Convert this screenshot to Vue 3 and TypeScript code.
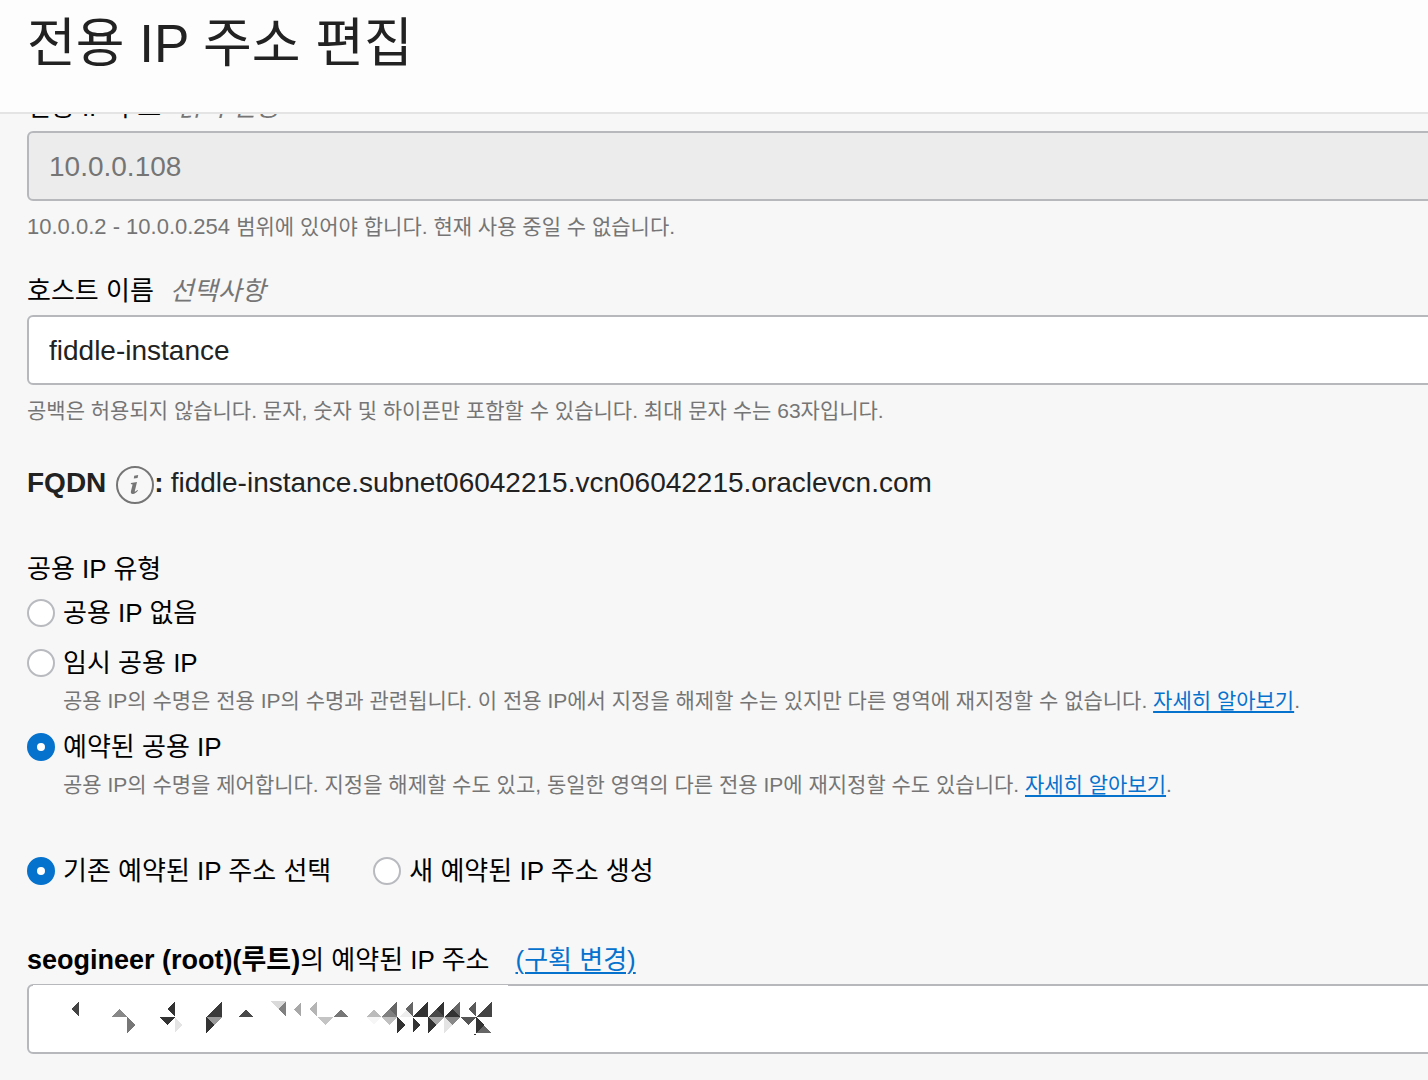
<script setup lang="ts">
import { ref } from 'vue'

interface Shard {
  points: string
  fill: string
}

const privateIp = ref('10.0.0.108')
const hostname = ref('fiddle-instance')
const publicIpType = ref('reserved')
const reservedMode = ref('existing')

// Masked value of the reserved address, drawn as triangular mosaic cells.
const shards: Shard[] = [
  { points: '24,24 32,16 32,32', fill: '#444' },
  { points: '65,32 72,24 80,32', fill: '#888' },
  { points: '80,32 88,40 80,48', fill: '#777' },
  { points: '120,24 128,16 128,32', fill: '#333' },
  { points: '112,32 128,32 120,40', fill: '#333' },
  { points: '128,32 135,40 128,47', fill: '#e4e4e4' },
  { points: '159,32 175,16 175,32', fill: '#3a3a3a' },
  { points: '159,32 167,40 159,48', fill: '#333' },
  { points: '159,32 175,32 167,40', fill: '#999' },
  { points: '192,32 199,24 206,32', fill: '#4a4a4a' },
  { points: '224,16 239,16 231,24', fill: '#dadada' },
  { points: '231,24 239,16 239,32', fill: '#808080' },
  { points: '247,24 254,17 254,32', fill: '#a8a8a8' },
  { points: '262,24 270,16 270,32', fill: '#b5b5b5' },
  { points: '270,32 286,32 278,40', fill: '#c4c4c4' },
  { points: '286,32 294,24 301,32', fill: '#777' },
  { points: '319,32 327,24 334,32', fill: '#bbb' },
  { points: '319,32 334,32 327,40', fill: '#f6f6f6' },
  { points: '335,32 342,24 350,32', fill: '#808080' },
  { points: '342,24 350,16 350,32', fill: '#666' },
  { points: '335,32 350,32 342,40', fill: '#c0c0c0' },
  { points: '350,32 358,40 350,48', fill: '#333' },
  { points: '352,32 359,25 366,32', fill: '#eee' },
  { points: '358,24 366,16 366,32', fill: '#666' },
  { points: '366,32 381,16 381,32', fill: '#333' },
  { points: '366,32 373,40 366,47', fill: '#333' },
  { points: '381,32 397,16 397,32', fill: '#333' },
  { points: '381,32 389,24 397,32', fill: '#4a4a4a' },
  { points: '381,32 397,32 389,40', fill: '#a8a8a8' },
  { points: '381,32 389,40 381,48', fill: '#333' },
  { points: '397,32 413,16 413,32', fill: '#666' },
  { points: '397,32 405,24 413,32', fill: '#333' },
  { points: '397,32 413,32 405,40', fill: '#888' },
  { points: '397,32 405,40 397,48', fill: '#e4e4e4' },
  { points: '421,24 429,16 429,32', fill: '#5a5a5a' },
  { points: '413,32 429,32 421,40', fill: '#555' },
  { points: '429,32 445,16 445,32', fill: '#444' },
  { points: '429,32 437,40 429,48', fill: '#333' },
  { points: '429,48 437,40 444,48', fill: '#666' },
  { points: '427,49 429,49 428,51', fill: '#333' },
]
</script>

<template>
  <div class="dialog">
    <header class="dialog-header">
      <h1>전용 IP 주소 편집</h1>
    </header>

    <main class="dialog-body">
      <form class="form" @submit.prevent>
        <div class="field">
          <label class="label" for="private-ip">전용 IP 주소<em class="hint">읽기 전용</em></label>
          <input id="private-ip" v-model="privateIp" class="input input-readonly" type="text" readonly />
          <p class="help help-latin">
            10.0.0.2 - 10.0.0.254 <span class="ko">범위에 있어야 합니다. 현재 사용 중일 수 없습니다.</span>
          </p>
        </div>

        <div class="field">
          <label class="label" for="hostname">호스트 이름<em class="hint">선택사항</em></label>
          <input id="hostname" v-model="hostname" class="input" type="text" />
          <p class="help">공백은 허용되지 않습니다. 문자, 숫자 및 하이픈만 포함할 수 있습니다. 최대 문자 수는 63자입니다.</p>
        </div>

        <p class="fqdn">
          <strong>FQDN</strong>
          <button class="info" type="button" aria-label="FQDN">
            <svg viewBox="0 0 38 38" width="38" height="38" aria-hidden="true">
              <circle cx="19" cy="19" r="18" fill="none" stroke="#757575" stroke-width="2" />
              <path d="M18.2 9.8 L22.2 9 L21.6 11.9 L17.8 12.6 Z" fill="#757575" />
              <path
                d="M15 16.9 L21 15.9 L18.8 25 C18.6 26 19 25.9 19.8 25.3 L21.4 23.9 L22 24.6 C20.2 27 18.2 28.2 16.6 28 C15 27.8 14.6 26.7 15 25 L16.6 18.4 L14.8 18.1 Z"
                fill="#757575"
              />
            </svg>
          </button>
          <strong class="colon">:</strong>
          <span>fiddle-instance.subnet06042215.vcn06042215.oraclevcn.com</span>
        </p>

        <fieldset class="group">
          <legend class="label">공용 IP 유형</legend>
          <label class="choice choice-first">
            <input v-model="publicIpType" type="radio" name="public-ip" value="none" />공용 IP 없음
          </label>
          <label class="choice">
            <input v-model="publicIpType" type="radio" name="public-ip" value="ephemeral" />임시 공용 IP
          </label>
          <p class="choice-help">
            공용 IP의 수명은 전용 IP의 수명과 관련됩니다. 이 전용 IP에서 지정을 해제할 수는 있지만 다른 영역에 재지정할 수 없습니다.
            <a href="#">자세히 알아보기</a>.
          </p>
          <label class="choice">
            <input v-model="publicIpType" type="radio" name="public-ip" value="reserved" />예약된 공용 IP
          </label>
          <p class="choice-help">
            공용 IP의 수명을 제어합니다. 지정을 해제할 수도 있고, 동일한 영역의 다른 전용 IP에 재지정할 수도 있습니다.
            <a href="#">자세히 알아보기</a>.
          </p>
        </fieldset>

        <div class="modes" role="radiogroup">
          <label class="choice-inline">
            <input v-model="reservedMode" type="radio" name="reserved-mode" value="existing" />기존 예약된 IP 주소 선택
          </label>
          <label class="choice-inline">
            <input v-model="reservedMode" type="radio" name="reserved-mode" value="new" />새 예약된 IP 주소 생성
          </label>
        </div>

        <div class="field reserved">
          <div class="label-row">
            <label class="label" for="reserved-ip"><strong class="owner">seogineer (root)(루트)</strong>의 예약된 IP 주소</label>
            <a class="change" href="#">(구획 변경)</a>
          </div>
          <div class="masked">
            <input id="reserved-ip" class="input" type="text" />
            <svg class="mosaic" viewBox="-14 0 475 62" width="475" height="62" aria-hidden="true">
              <polygon v-for="(s, i) in shards" :key="i" :points="s.points" :fill="s.fill" />
            </svg>
          </div>
        </div>
      </form>
    </main>
  </div>
</template>

<style>
body {
  margin: 0;
  background: #f7f7f7;
}
</style>

<style scoped>
.dialog {
  box-sizing: border-box;
  min-height: 100vh;
  overflow: hidden;
  background: #f7f7f7;
  color: #000;
  font-family: 'Liberation Sans', 'Noto Sans CJK KR', sans-serif;
  font-size: 26px;
}

.dialog-header {
  box-sizing: border-box;
  height: 114px;
  padding: 6px 27px 0;
  background: #fdfdfd;
  border-bottom: 2px solid #e4e4e4;
}

h1 {
  margin: 0;
  color: #222;
  font-size: 53px;
  font-weight: 400;
  line-height: 76px;
}

p {
  margin: 0;
}

.dialog-body {
  overflow: hidden;
}

/* The form is scrolled a little way under the header. */
.form {
  margin-top: -25px;
  padding: 0 0 26px 27px;
}

.field {
  display: flex;
  flex-direction: column;
  margin-bottom: 32px;
}

.label {
  padding: 0;
  line-height: 36px;
}

.hint {
  margin-left: 16px;
  color: #757575;
}

.input {
  box-sizing: border-box;
  width: calc(100% + 8px);
  height: 70px;
  margin: 6px 0 0;
  padding: 2px 20px 0;
  border: 2px solid #b6b8bc;
  border-radius: 6px;
  outline: none;
  background: #fff;
  color: #222;
  font-family: inherit;
  font-size: 28px;
}

.input-readonly {
  background: #ececec;
  color: #757575;
}

.help,
.choice-help {
  color: #757575;
  font-size: 21px;
  line-height: 28px;
  white-space: nowrap;
}

.help {
  margin-top: 12px;
}

.help-latin {
  font-size: 22px;
}

.ko {
  font-size: 21px;
}

.fqdn {
  display: flex;
  align-items: center;
  margin-top: 37px;
  color: #222;
  font-size: 28px;
  line-height: 38px;
}

.info {
  width: 38px;
  height: 38px;
  margin: 4px 0 0 10px;
  padding: 0;
  border: 0;
  background: none;
}

.info svg {
  display: block;
}

.colon {
  margin-right: 7px;
}

.group {
  min-width: 0;
  margin: 47px 0 0;
  padding: 0;
  border: 0;
}

.choice,
.choice-inline {
  display: flex;
  align-items: center;
  line-height: 36px;
}

.choice {
  margin-top: 14px;
}

.choice-first {
  margin-top: 8px;
}

.choice-help {
  margin-top: 6px;
  padding-left: 36px;
}

input[type='radio'] {
  flex: none;
  box-sizing: border-box;
  width: 28px;
  height: 28px;
  margin: 0 8px 0 0;
  border: 2px solid #b8babf;
  border-radius: 50%;
  appearance: none;
  background: #fff;
}

input[type='radio']:checked {
  border: 10px solid #0572ce;
}

a {
  color: #0572ce;
  text-decoration: underline;
  text-decoration-thickness: 2px;
  text-underline-offset: 3px;
}

.modes {
  display: flex;
  gap: 42px;
  margin-top: 54px;
}

.reserved {
  margin-top: 53px;
  margin-bottom: 0;
}

.label-row {
  display: flex;
  gap: 26px;
  line-height: 36px;
}

.owner {
  font-size: 27px;
}

.masked {
  position: relative;
}

.mosaic {
  position: absolute;
  top: 7px;
  left: 6px;
  background: #fff;
  shape-rendering: crispEdges;
}
</style>
